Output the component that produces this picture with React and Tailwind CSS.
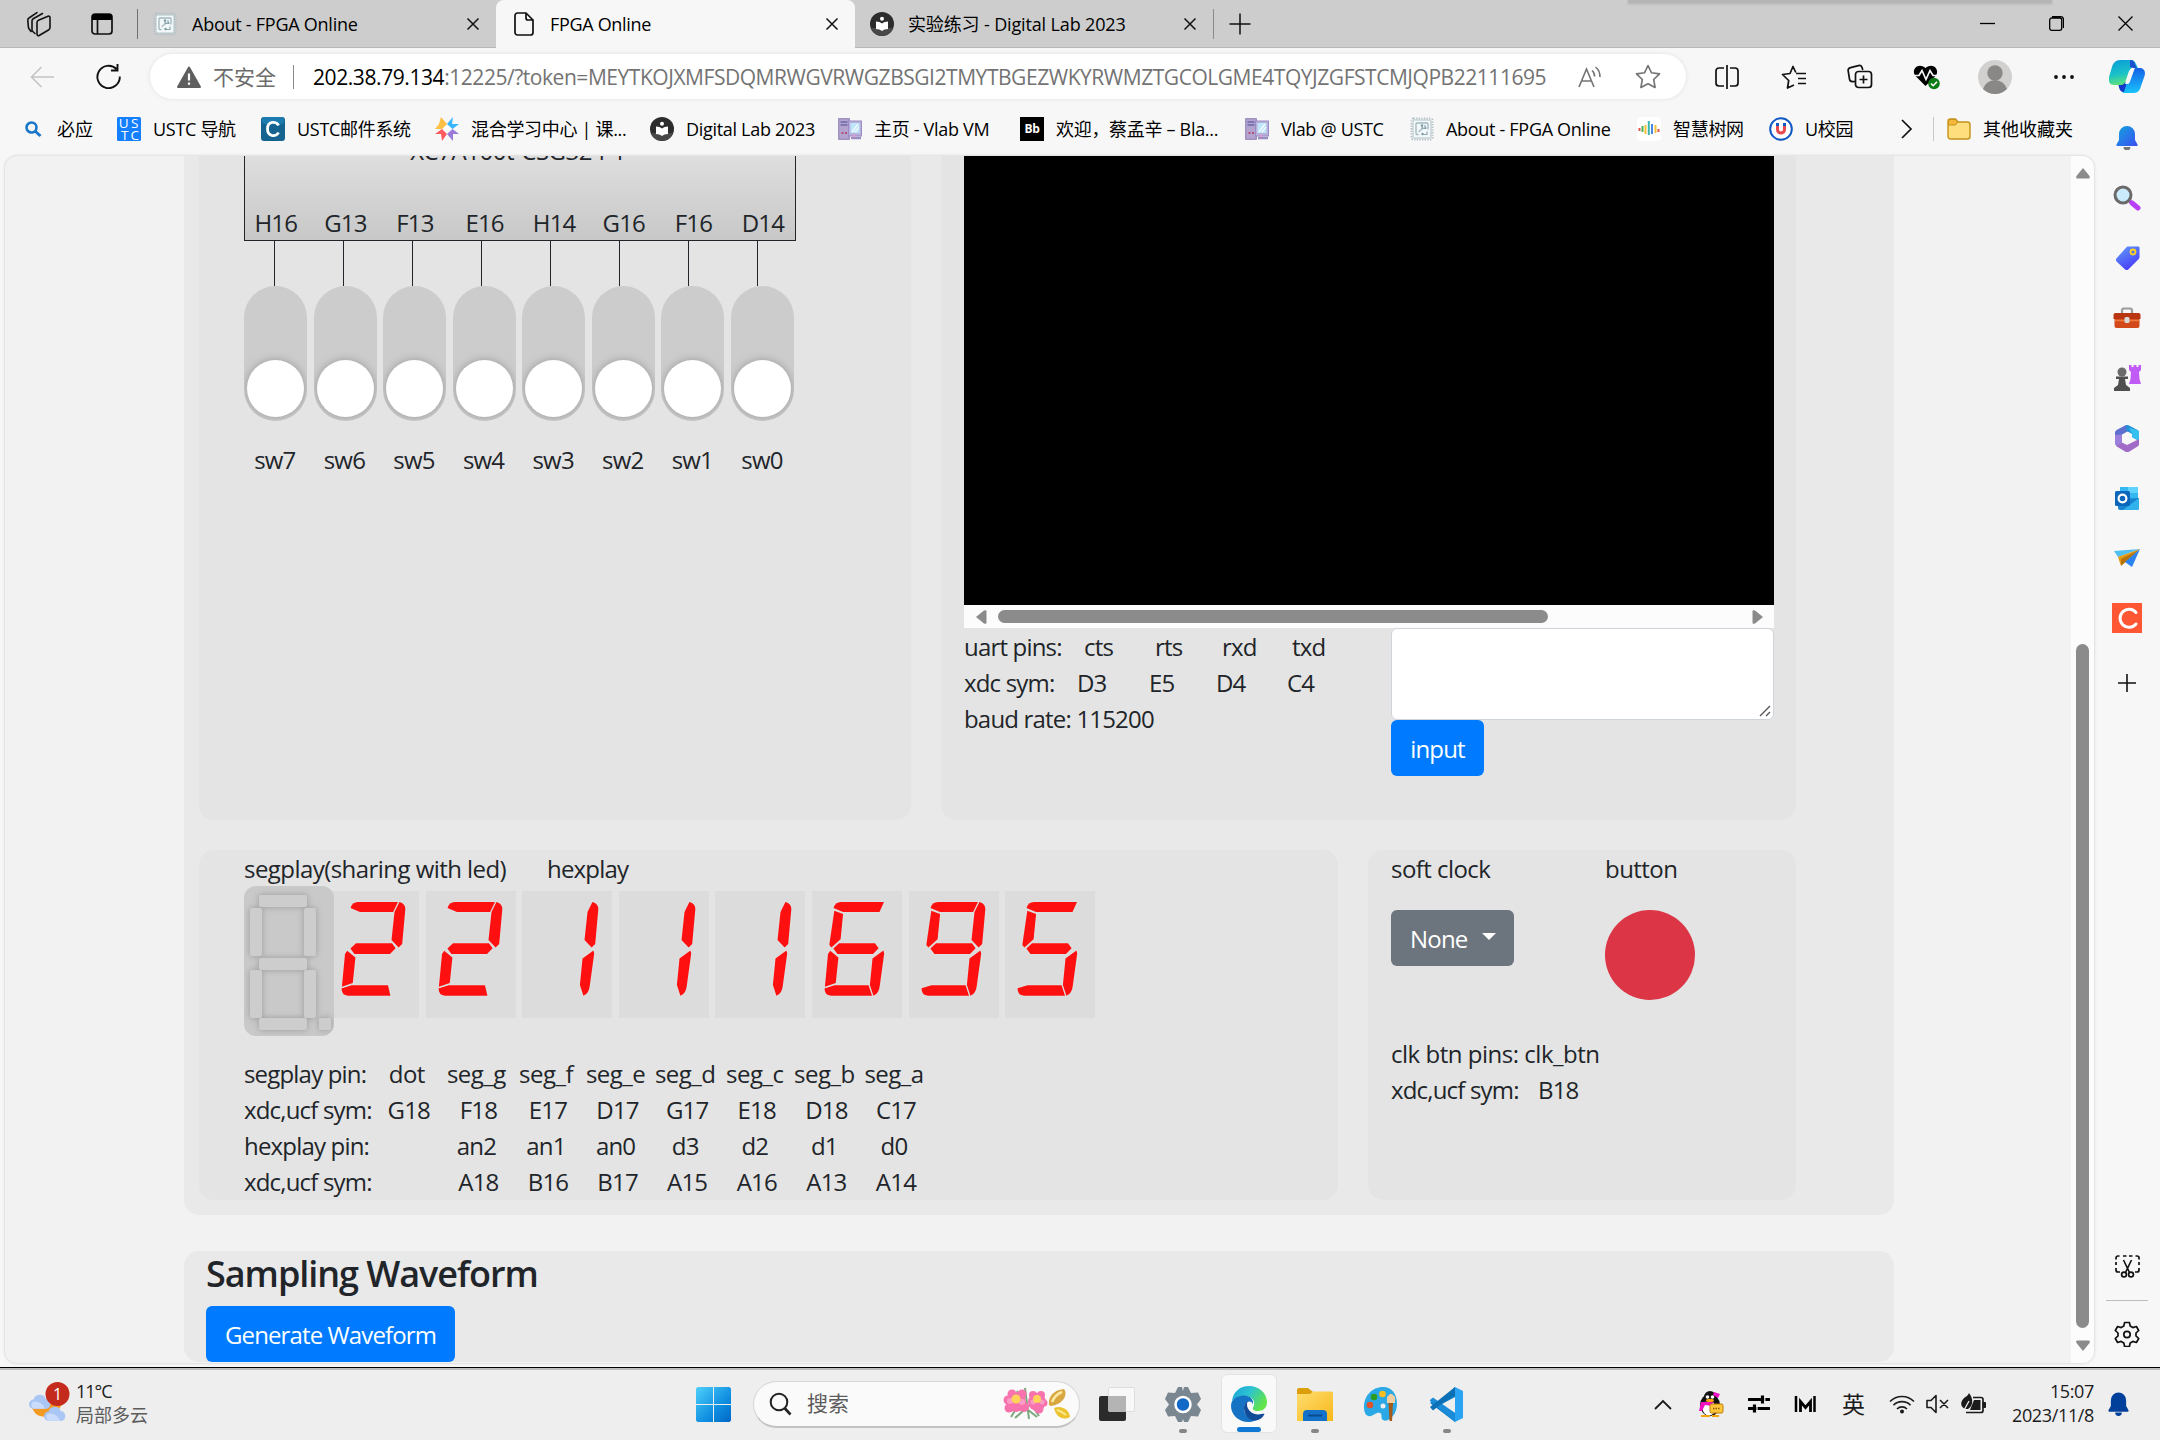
import React from "react";

const Svg = ({ w = 24, h = w, box, children, className = "" }) => (
  <svg width={w} height={h} viewBox={box || `0 0 ${w} ${h}`} fill="none" className={`shrink-0 ${className}`}>
    {children}
  </svg>
);

/* ---------- favicons ---------- */
const FpgaIcon = () => (
  <Svg>
    <rect x="1.500" y="1.500" width="21" height="21" rx="2" stroke="#b4c1c6" strokeWidth="2" strokeDasharray="1.300 1.300" />
    <rect x="3" y="3" width="18" height="18" rx="1.500" fill="#f2f8f9" stroke="#b4c4ca" />
    <path d="M8.500 17.500H7a1 1 0 0 1-1-1V7a1 1 0 0 1 1-1h10a1 1 0 0 1 1 1v5.500M9 15c.5-2.500 4-1.500 4-5" stroke="#a3b6bd" strokeWidth="1.300" />
    <path d="M12 8.500v3h3M15 8v2.500M13 17.500h4v-3" stroke="#8fa9b3" strokeWidth="1.200" />
    <circle cx="12" cy="8.500" r="1.200" fill="#7d9ba6" />
    <circle cx="15.500" cy="11" r="1.100" fill="#7d9ba6" />
    <circle cx="12.500" cy="17" r="1.200" fill="#7d9ba6" />
  </Svg>
);
const LabIcon = () => (
  <Svg>
    <circle cx="12" cy="12" r="12" fill="#2c2c2c" />
    <path d="M0.800 16a12 12 0 0 0 22.400 0z" fill="#484848" />
    <circle cx="12" cy="6.800" r="2" fill="#fff" />
    <path d="M6 9.500c2.500 0 4.600.7 6 2 1.400-1.300 3.500-2 6-2V17c-2.500 0-4.600.7-6 2-1.400-1.300-3.500-2-6-2z" fill="#fff" />
  </Svg>
);
const VlabIcon = () => (
  <Svg>
    <rect x="0.700" y="1.700" width="10.600" height="20.600" fill="#b3a3cf" stroke="#8f7fb5" />
    <path d="M2.500 5h7M2.500 8h7" stroke="#6d6aa8" strokeWidth="1.500" />
    <path d="M3.500 16h2M7 16h2" stroke="#b5507c" strokeWidth="2" />
    <rect x="10.500" y="4" width="13" height="15" fill="#b9b0dc" stroke="#9a8cc4" />
    <rect x="12.500" y="6" width="9" height="10" fill="#bfe6fa" />
    <path d="M14 15l6-8M17 15l4-5" stroke="#fff" strokeWidth="1.200" />
    <path d="M13 21h10" stroke="#9a8cc4" strokeWidth="2.500" />
    <path d="M16 18v2" stroke="#ff8cc6" strokeWidth="1.500" />
  </Svg>
);
const BingIcon = () => (
  <Svg w={18} h={18}>
    <circle cx="7.500" cy="7.500" r="5" stroke="#1a76c9" strokeWidth="2.600" />
    <path d="M11.500 11.500l5 4.500" stroke="#1a76c9" strokeWidth="3" />
  </Svg>
);
const UstcIcon = () => (
  <Svg>
    <rect width="24" height="24" rx="1.500" fill="#1480ff" />
    <g fill="#fff" fontSize="13.500" textAnchor="middle">
      <text x="6.500" y="11">U</text>
      <text x="17.500" y="11">S</text>
      <text x="7.500" y="22.500">T</text>
      <text x="17.500" y="22.500">C</text>
    </g>
  </Svg>
);
const MailIcon = () => (
  <Svg>
    <rect width="24" height="24" rx="3" fill="#15648f" />
    <rect x="1" y="0" width="22" height="7" rx="3" fill="#1d7caf" />
    <path d="M17.500 8.500C15.800 4.200 6.500 3.600 6.500 12s9.300 7.800 11 3.500" stroke="#fff" strokeWidth="2.800" />
  </Svg>
);
const MixIcon = () => (
  <Svg>
    <path d="M6 0l6 7-5 5H0l4-5z" fill="#ffc043" />
    <path d="M18 0l-1 7h7l-6.500 5-5.500-5z" fill="#38b6ff" />
    <path d="M0 17l7-5 5 5-5 7-1-7z" fill="#ff5a5f" />
    <path d="M24 17l-6.500-5-5.500 5 6 7v-7z" fill="#9b7bd8" />
    <path d="M12 8l4.500 4-4.500 4-4-4z" fill="#fff" />
  </Svg>
);
const BbIcon = () => (
  <div className="flex h-6 w-6 shrink-0 items-center justify-center bg-black text-[12px] font-bold leading-4 tracking-tight text-white">Bb</div>
);
const TreeIcon = () => (
  <Svg>
    <rect width="24" height="24" rx="4" fill="#fff" />
    <path d="M2.500 11v3M21.500 12v3" stroke="#e8504a" strokeWidth="2" />
    <path d="M5.500 9v6" stroke="#4fb35c" strokeWidth="2" />
    <path d="M8.500 8v9M18.500 8v8" stroke="#f4c136" strokeWidth="2" />
    <path d="M11.800 4v14" stroke="#3db6ac" strokeWidth="2" />
    <path d="M15 7v10" stroke="#4a86e8" strokeWidth="2" />
  </Svg>
);
const UIcon = () => (
  <Svg>
    <circle cx="12" cy="12" r="10.800" fill="#fff" stroke="#1259c3" strokeWidth="2" />
    <path d="M8.500 6v6.500c0 4.500 7 4.500 7 0V6" stroke="#e8474b" strokeWidth="3" />
    <path d="M8.500 6v3M15.500 6v3" stroke="#1259c3" strokeWidth="3" />
  </Svg>
);
const FolderIcon = () => (
  <Svg>
    <path d="M1 4.500A2.500 2.500 0 0 1 3.500 2h5l2.500 3h9.500A2.500 2.500 0 0 1 23 7.500v12a2.500 2.500 0 0 1-2.500 2.500h-17A2.500 2.500 0 0 1 1 19.500z" fill="#ffdf7d" stroke="#c4911a" strokeWidth="1.400" />
    <path d="M1.500 8V4.500a2 2 0 0 1 2-2h5L10.500 5 8.500 8z" fill="#f5b73c" stroke="#c4911a" />
  </Svg>
);

const TabClose = () => (
  <Svg w={14}>
    <path d="M1.500 1.500l11 11M12.500 1.500l-11 11" stroke="#111" strokeWidth="1.500" />
  </Svg>
);

const Divider = ({ className }) => <div className={`w-px shrink-0 ${className}`} />;

/* ---------- browser chrome ---------- */
const TabBar = () => (
  <div className="relative flex h-12 shrink-0 bg-[#cdcdcd] text-[18px] leading-6 tracking-[-0.018em] text-black">
    <div className="absolute left-[1628px] top-0 h-[3px] w-[424px] bg-[#b5b5b5] shadow-[0_1px_3px_#b0b0b0]" />
    <div className="flex w-[496px] items-center border-b border-[#b8b8b8] pl-[26px]">
      <Svg w={26}>
        <path d="M5 20.500L3.200 18c-.5-.6-.7-1-.8-1.800L1.800 9.500c-.1-1.100.3-2 1.200-2.500L11 1.700M9 22.500l-2.200-2c-.6-.5-.8-1-.8-1.800V10c0-1 .4-1.800 1.200-2.300L16.500 2.500" stroke="#111" strokeWidth="1.600" strokeLinecap="round" />
        <path d="M12.500 9.300l9.500-4c1.200-.5 2 .1 2 1.300v10c0 .9-.4 1.600-1.100 2.100l-9.300 5.600c-1.500.9-2.600.2-2.600-1.300V11.500c0-1.100.5-1.800 1.500-2.200z" stroke="#111" strokeWidth="1.600" strokeLinejoin="round" />
      </Svg>
      <Svg w={22} className="ml-[39px]">
        <rect x="1" y="1" width="20" height="20" rx="3" stroke="#111" strokeWidth="1.700" />
        <path d="M1 7V4a3 3 0 0 1 3-3h14a3 3 0 0 1 3 3v3z" fill="#000" />
        <path d="M6.500 7v14" stroke="#111" strokeWidth="1.700" />
      </Svg>
      <Divider className="ml-6 h-[30px] bg-[#6f6f6f]" />
      <div className="ml-[15px] flex"><FpgaIcon /></div>
      <span className="ml-[15px] w-[274px] whitespace-nowrap tracking-[-0.014em]">About - FPGA Online</span>
      <TabClose />
    </div>
    <div className="flex w-[359px] items-center rounded-t-lg bg-[#f7f7f7] pl-[18px]">
      <Svg w={20} h={24}>
        <path d="M3.500 1h8.500l7 7v12.500a2.500 2.500 0 0 1-2.500 2.500h-13A2.500 2.500 0 0 1 1 20.500v-17A2.500 2.500 0 0 1 3.500 1zM12 1v5a2 2 0 0 0 2 2h5" stroke="#111" strokeWidth="1.700" />
      </Svg>
      <span className="ml-4 w-[275px] whitespace-nowrap">FPGA Online</span>
      <TabClose />
    </div>
    <div className="flex flex-1 items-center border-b border-[#b8b8b8] pl-[15px]">
      <LabIcon />
      <span className="ml-[14px] w-[275px] whitespace-nowrap tracking-[-0.008em]">实验练习 - Digital Lab 2023</span>
      <TabClose />
      <Divider className="ml-4 h-[30px] bg-[#8a8a8a]" />
      <Svg w={22} className="ml-[15px]">
        <path d="M11 .5v21M.5 11h21" stroke="#111" strokeWidth="1.500" />
      </Svg>
      <div className="ml-auto flex items-center gap-[54px] pr-[27px]">
        <Svg w={15}><path d="M0 7.500h15" stroke="#000" strokeWidth="1.300" /></Svg>
        <Svg w={15}>
          <path d="M.7 4a2 2 0 0 1 2-2h8a2 2 0 0 1 2 2v8.300a2 2 0 0 1-2 2h-8a2 2 0 0 1-2-2zM3 .7h8.500a3 3 0 0 1 3 3V12" stroke="#000" strokeWidth="1.300" />
        </Svg>
        <Svg w={15}><path d="M.5.5l14 14M14.500.5l-14 14" stroke="#000" strokeWidth="1.300" /></Svg>
      </div>
    </div>
  </div>
);

const AddressBar = () => (
  <div className="flex h-[57px] shrink-0 items-center pl-[30px]">
    <Svg w={24} h={22}>
      <path d="M11.500 1L1.500 11l10 10M1.500 11H24" stroke="#c4c4c4" strokeWidth="1.600" />
    </Svg>
    <Svg w={25} h={25} className="ml-[42px]">
      <path d="M20.500 5A11.200 11.200 0 1 0 23.800 12.500M21.500 0v6.500H15" stroke="#111" strokeWidth="1.900" />
    </Svg>
    <div className="ml-[29px] flex h-[45px] w-[1536px] items-center rounded-full bg-white pl-[27px] text-[21px] leading-7 shadow-[0_0_4px_#e0e0e0]">
      <Svg w={24} h={22}>
        <path d="M12 1.500L23 21H1z" fill="#5f5f5f" stroke="#5f5f5f" strokeWidth="2" strokeLinejoin="round" />
        <path d="M12 7.500v7M12 16.500v2.200" stroke="#fff" strokeWidth="2.200" />
      </Svg>
      <span className="ml-3 w-20 whitespace-nowrap text-[#6b6b6b]">不安全</span>
      <Divider className="h-6 bg-[#8a8a8a]" />
      <span className="ml-[19px] w-[1265px] whitespace-nowrap tracking-[-0.0218em] text-[#737373]">
        <span className="tracking-[-0.02em] text-black">202.38.79.134</span>:12225/?token=MEYTKOJXMFSDQMRWGVRWGZBSGI2TMYTBGEZWKYRWMZTGCOLGME4TQYJZGFSTCMJQPB22111695
      </span>
      <Svg w={24} h={22}>
        <path d="M1 21L8.500 3 16 21M3.800 15h9.400M14 4.500c1.800 1.500 2.600 3.500 2.600 6M17.500 1c3 2.400 4.500 6 4.500 10" stroke="#737373" strokeWidth="1.600" />
      </Svg>
      <Svg w={26} h={25} className="ml-[33px]" box="0 0 26 25">
        <path d="M13 1.500l3.500 7.300 8 1.100-5.800 5.600 1.400 8-7.100-3.800-7.100 3.800 1.400-8L1.500 9.900l8-1.100z" stroke="#737373" strokeWidth="1.600" strokeLinejoin="round" />
      </Svg>
    </div>
    <Svg w={26} h={24} className="ml-[28px]">
      <path d="M10 3H5a3 3 0 0 0-3 3v12a3 3 0 0 0 3 3h5M16 3h5a3 3 0 0 1 3 3v12a3 3 0 0 1-3 3h-5M13 0v24" stroke="#111" strokeWidth="1.700" />
    </Svg>
    <Svg w={26} h={24} className="ml-[41px]">
      <path d="M15 8.500h10M17 13.500h8M17 18.500h8M13 20l-6.500 3 1.200-7.500L1.500 9.500l7.500-1L12 1.500l2.800 6" stroke="#111" strokeWidth="1.700" strokeLinejoin="round" />
    </Svg>
    <Svg w={26} h={25} className="ml-[40px]">
      <path d="M8 17.500l-2.500.2a3 3 0 0 1-3-2.500L1.200 7A3 3 0 0 1 3.500 3.600l8-2A3 3 0 0 1 15 3.300l.8 2.700" stroke="#111" strokeWidth="1.700" />
      <rect x="8.500" y="7.500" width="16" height="16" rx="3" stroke="#111" strokeWidth="1.700" />
      <path d="M16.500 11.500v8M12.500 15.500h8" stroke="#111" strokeWidth="1.700" />
    </Svg>
    <Svg w={27} h={26} className="ml-[40px]">
      <path d="M12.500 22L2.500 12C-2.500 6 5-2.500 12.500 4c7.500-6.500 15 2 10 8z" fill="#000" />
      <path d="M0 11.500h6l3-5 4 9 4-9 3 5h5" stroke="#f7f7f7" strokeWidth="1.700" />
      <circle cx="21" cy="19.500" r="5.800" fill="#0f7b14" />
      <path d="M18 19.500l2.200 2.200 3.800-4" stroke="#fff" strokeWidth="1.600" />
    </Svg>
    <Svg w={34} className="ml-[38px]">
      <circle cx="17" cy="17" r="17" fill="#d2d0ce" />
      <circle cx="17" cy="13" r="7.700" fill="#8a8886" />
      <path d="M5 29a12.500 12.500 0 0 1 24 0 17 17 0 0 1-24 0z" fill="#8a8886" />
    </Svg>
    <Svg w={22} h={6} className="ml-[41px]">
      <circle cx="3" cy="3" r="1.900" fill="#111" /><circle cx="11" cy="3" r="1.900" fill="#111" /><circle cx="19" cy="3" r="1.900" fill="#111" />
    </Svg>
    <Svg w={36} h={33} className="ml-[34px]">
      <path d="M10 24l4 9h11c4 0 6-3 7-7l3.500-10c1.500-5-1-8-5-8h-5l-6 16z" fill="url(#cp2)" />
      <path d="M9 22h9l-3 10c-4 0-5-3-6-10z" fill="#1239c9" />
      <path d="M11 0h11c3 0 4 2 5 4l2 4h-4c-4 0-5 3-6 6l-2 6c-1 3-2 5-6 5H5c-4 0-6-3-5-8L3 7c1-4 4-7 8-7z" fill="url(#cp1)" />
      <path d="M16 24l5-14c1-2 2-2.500 4-2.500h1l-5 14c-1 2-2 2.500-4 2.500z" fill="#f7f7f7" />
      <path d="M21 0c3 0 4 1.500 5 4l1.700 4H24l-3-1z" fill="#1a4fd0" />
    </Svg>
  </div>
);

const bookmarks = [
  [UstcIcon, "USTC 导航", "w-[108px]"],
  [MailIcon, "USTC邮件系统", "w-[138px]"],
  [MixIcon, "混合学习中心 | 课...", "w-[179px]"],
  [LabIcon, "Digital Lab 2023", "w-[152px]"],
  [VlabIcon, "主页 - Vlab VM", "w-[146px]"],
  [BbIcon, "欢迎，蔡孟辛 – Bla...", "w-[189px]"],
  [VlabIcon, "Vlab @ USTC", "w-[129px]"],
  [FpgaIcon, "About - FPGA Online", "w-[191px]"],
  [TreeIcon, "智慧树网", "w-[96px]"],
  [UIcon, "U校园", "w-[96px]"],
];

const BookmarkBar = () => (
  <div className="flex h-[50px] shrink-0 items-center whitespace-nowrap pb-[3px] pl-6 text-[18px] leading-6 tracking-[-0.017em] text-black">
    <BingIcon />
    <span className="ml-[15px] w-[60px] tracking-normal">必应</span>
    {bookmarks.map(([Icon, label, width]) => (
      <div key={label} className="flex items-center">
        <Icon />
        <span className={`ml-3 ${width}`}>{label}</span>
      </div>
    ))}
    <Svg w={12} h={20}><path d="M1 1l9 9-9 9" stroke="#111" strokeWidth="1.700" /></Svg>
    <Divider className="ml-5 mr-[13px] h-6 bg-[#c8c8c8]" />
    <FolderIcon />
    <span className="ml-3 tracking-normal">其他收藏夹</span>
  </div>
);

/* ---------- page content ---------- */
const pins = ["H16", "G13", "F13", "E16", "H14", "G16", "F16", "D14"];
const switches = [7, 6, 5, 4, 3, 2, 1, 0];

const SwitchPanel = () => (
  <div className="h-[664px] w-[712px] rounded-b-[15px] bg-[#e4e4e4] pl-[45px]">
    <div className="h-[85px] w-[552px] overflow-hidden border-x border-b border-[#212529] bg-linear-to-b from-[#dedede] to-[#c8c8c8]">
      <div className="-mt-[23px] pr-1 text-center leading-9 tracking-[-0.02em]">XC7A100t-CSG324-1</div>
      <div className="-ml-1 mt-9 flex leading-9">
        {pins.map((p) => <span key={p} className="w-[69.6px] shrink-0 text-center">{p}</span>)}
      </div>
    </div>
    <div className="flex pl-[30px]">
      {pins.map((p) => <div key={p} className="h-[45px] w-[69px]"><div className="h-full w-px bg-[#212529]" /></div>)}
    </div>
    <div className="flex gap-[6.5px]">
      {switches.map((n) => (
        <div key={n} className="flex h-[135px] w-[63px] shrink-0 items-end justify-center overflow-hidden rounded-full bg-[#ccc] pb-1">
          <div className="h-[57px] w-[57px] rounded-full bg-white shadow-[0_0_8px_#999]" />
        </div>
      ))}
    </div>
    <div className="-ml-[4px] mt-[21px] flex leading-9">
      {switches.map((n) => <span key={n} className="w-[69.6px] shrink-0 text-center">sw{n}</span>)}
    </div>
  </div>
);

const UartPanel = () => (
  <div className="h-[664px] w-[855px] rounded-b-[15px] bg-[#e4e4e4] pl-[23px]">
    <div className="h-[449px] w-[810px] bg-black" />
    <div className="flex h-[23px] w-[810px] items-center bg-[#fcfcfc] pl-3">
      <Svg w={11} h={14}><path d="M0 7l8-6.500q2.500-1 2.500 1v11q0 2-2.500 1z" fill="#8b8b8b" /></Svg>
      <div className="ml-[11px] h-[13px] w-[550px] rounded-full bg-[#8b8b8b]" />
      <Svg w={11} h={14} className="ml-[204px]"><path d="M11 7L3 .5Q.5-.5.500 1.500v11q0 2 2.500 1z" fill="#8b8b8b" /></Svg>
    </div>
    <div className="flex">
      <div className="w-[427px] whitespace-nowrap pt-px leading-9">
        <div className="flex"><span className="w-[120px]">uart pins:</span><span className="w-[71px]">cts</span><span className="w-[67px]">rts</span><span className="w-[70px]">rxd</span><span>txd</span></div>
        <div className="flex"><span className="w-[113px]">xdc sym:</span><span className="w-[72px]">D3</span><span className="w-[67px]">E5</span><span className="w-[71px]">D4</span><span>C4</span></div>
        <div>baud rate: 115200</div>
      </div>
      <div>
        <div className="flex h-[92px] w-[383px] items-end justify-end rounded-md border border-[#ced4da] bg-white p-[2px]">
          <Svg w={12}><path d="M1 11L11 1M7 11l4-4" stroke="#555" strokeWidth="1.400" /></Svg>
        </div>
        <div className="flex h-14 w-[93px] items-center justify-center rounded-md bg-[#007bff] pt-0.5 text-white">input</div>
      </div>
    </div>
  </div>
);

const SEG = {
  a: "M21.500 17Q23 11 29 11H72L67.500 21H31Z",
  d: "M12.500 97.300L22.500 94.300H59L61.400 104.700H19Q12.500 104.500 12.500 97.300Z",
  g: "M21.400 57.500L27 52.300H63L66.600 57.200L61 63H25.400Z",
  b: "M70.400 11Q76.600 12.500 76.300 18.500L73.200 53L69.600 56.500L62.500 49L65.500 21Z",
  c: "M71.400 59.500L72.200 62.500L67.900 94Q67 103 61.400 104.800L57.900 94L60.500 67.500Z",
  e: "M18.200 59.700L26.400 66.500L23.800 92L12.900 95.800L16 63Z",
  f: "M22.300 19.700L31.100 23L28.600 48.300L19.400 56.500L17.300 54Z",
};
const DIGITS = { 1: "bc", 2: "adgbe", 5: "adgcf", 6: "adgcef", 9: "adgbcf" };

const HexDigit = ({ value }) => (
  <Svg w={90} h={127} className="bg-[#dcdcdc]">
    {DIGITS[value].split("").map((s) => (
      <g key={s}>
        <path d={SEG[s]} stroke="#dedede" strokeWidth="2.600" />
        <path d={SEG[s]} fill="#ff1010" />
      </g>
    ))}
  </Svg>
);

const SegDisplay = () => (
  <Svg w={90} h={150} className="z-10 -mt-[5px] rounded-xl bg-[#c9c9c9]">
    <g fill="#cdcdcd" className="drop-shadow-[0_0_3px_#999]">
      <rect x="15" y="9" width="48" height="12" rx="2" />
      <rect x="6" y="22" width="12" height="48" rx="2" />
      <rect x="60" y="22" width="12" height="48" rx="2" />
      <rect x="15" y="72" width="48" height="12" rx="2" />
      <rect x="6" y="84" width="12" height="48" rx="2" />
      <rect x="60" y="84" width="12" height="48" rx="2" />
      <rect x="15" y="132" width="48" height="12" rx="2" />
      <rect x="75" y="132" width="12" height="12" rx="1" />
    </g>
  </Svg>
);

const pinRows = [
  ["segplay pin:", ["dot", "seg_g", "seg_f", "seg_e", "seg_d", "seg_c", "seg_b", "seg_a"], "pl-0"],
  ["xdc,ucf sym:", ["G18", "F18", "E17", "D17", "G17", "E18", "D18", "C17"], "pl-[4px]"],
  ["hexplay pin:", ["", "an2", "an1", "an0", "d3", "d2", "d1", "d0"], "pl-0"],
  ["xdc,ucf sym:", ["", "A18", "B16", "B17", "A15", "A16", "A13", "A14"], "pl-[4px]"],
];

const DisplayPanel = () => (
  <div className="h-[350px] w-[1139px] rounded-[15px] bg-[#e4e4e4] pl-[45px] pt-px">
    <div className="flex whitespace-nowrap leading-9"><span className="w-[303px] tracking-[-0.023em]">segplay(sharing with led)</span><span>hexplay</span></div>
    <div className="mt-1 flex h-[127px]">
      <SegDisplay />
      <div className="-ml-[5px] flex gap-[6.600px]">
        {"22111695".split("").map((d, i) => <HexDigit key={i} value={d} />)}
      </div>
    </div>
    <div className="mt-[38px] whitespace-nowrap leading-9">
      {pinRows.map(([label, cells, shift], i) => (
        <div key={i} className="flex">
          <span className="w-32 shrink-0">{label}</span>
          {cells.map((c, j) => <span key={j} className={`w-[69.6px] shrink-0 text-center ${shift} ${i === 0 ? "tracking-[-0.022em]" : ""}`}>{c}</span>)}
        </div>
      ))}
    </div>
  </div>
);

const ClockPanel = () => (
  <div className="h-[350px] w-[428px] whitespace-nowrap rounded-[15px] bg-[#e4e4e4] pl-[23px] pt-px leading-9">
    <div className="flex tracking-[-0.023em]"><span className="w-[214px]">soft clock</span><span>button</span></div>
    <div className="mt-[23px] flex">
      <div className="w-[214px]">
        <div className="flex h-14 w-[123px] items-center rounded-md bg-[#6c757d] pl-[19px] pt-0.5 text-white">
          <span className="w-[72px]">None</span>
          <Svg w={14} h={7} className="-mt-[5px]"><path d="M0 0h14L7 7z" fill="#fff" /></Svg>
        </div>
      </div>
      <div className="h-[90px] w-[90px] rounded-full bg-[#dc3545]" />
    </div>
    <div className="mt-9 tracking-[-0.02em]">clk btn pins: clk_btn</div>
    <div className="flex"><span className="w-[147px]">xdc,ucf sym:</span><span>B18</span></div>
  </div>
);

const Page = () => (
  <div className="ml-[5px] flex h-[1207px] w-[2089px] shrink-0 overflow-hidden rounded-xl bg-[#f2f2f2] shadow-[0_0_3px_#c4c4c4]">
    <div className="w-[2066px] pl-[179px] text-[24px] tracking-[-0.034em] text-[#212529]">
      <div className="h-[1059px] w-[1710px] rounded-b-[15px] bg-[#e9e9e9] pl-[15px]">
        <div className="flex gap-[30px]"><SwitchPanel /><UartPanel /></div>
        <div className="mt-[30px] flex gap-[30px]"><DisplayPanel /><ClockPanel /></div>
      </div>
      <div className="mt-9 h-[111px] w-[1710px] rounded-[15px] bg-[#e9e9e9] pl-[22px]">
        <div className="h-[55px] text-[36px] font-semibold leading-[46px] tracking-[-0.029em]">Sampling Waveform</div>
        <div className="flex h-14 w-[249px] items-center justify-center rounded-md bg-[#007bff] pt-0.5 tracking-[-0.037em] text-white">Generate Waveform</div>
      </div>
    </div>
    <div className="flex w-[23px] flex-col items-center bg-[#fcfcfc] pt-3">
      <Svg w={14} h={11}><path d="M7 0l6.500 8q1 2.500-1 2.500h-11q-2 0-1-2.500z" fill="#8b8b8b" /></Svg>
      <div className="mt-[465px] h-[684px] w-[13px] rounded-full bg-[#8b8b8b]" />
      <Svg w={14} h={11} className="mt-3"><path d="M7 11l6.500-8q1-2.500-1-2.500h-11q-2 0-1 2.500z" fill="#8b8b8b" /></Svg>
    </div>
  </div>
);

/* ---------- edge sidebar ---------- */
const Bell = ({ color, w = 22, h = 24 }) => (
  <Svg w={w} h={h} box="0 0 22 24">
    <path d="M11 0a8 8 0 0 1 8 8v6l2.500 4.500c.5 1-.2 1.500-1 1.500h-19c-.8 0-1.500-.5-1-1.500L3 14V8a8 8 0 0 1 8-8z" fill={color} />
    <path d="M7.500 21h7a3.500 3.500 0 0 1-7 0z" fill={color === "url(#bell)" ? "#777" : color} />
  </Svg>
);
const sideIcons = [
  <Svg w={28} h={26}>
    <ellipse cx="10" cy="10" rx="8" ry="8" fill="#c9ebfb" stroke="#6a6a6a" strokeWidth="3" />
    <path d="M16.500 16l4 3.500" stroke="#8a5aa0" strokeWidth="3" /><path d="M19 18l6 5" stroke="#b83ff5" strokeWidth="5" strokeLinecap="round" />
  </Svg>,
  <Svg w={26} h={26}>
    <path d="M14 1.500h10c1 0 1.500.5 1.500 1.500v9c0 1-.5 1.700-1 2.200l-10 10c-1.200 1.200-2.500 1.200-3.700 0l-8-7.500c-1.200-1-1.200-2.700 0-3.700l9-10c.7-.8 1.300-1.500 2.200-1.500z" fill="url(#tag)" />
    <circle cx="19" cy="7" r="2.500" stroke="#ffd21f" strokeWidth="1.800" fill="#5876e8" />
  </Svg>,
  <Svg w={28} h={24}>
    <path d="M9 7V4.500A2 2 0 0 1 11 2.500h6a2 2 0 0 1 2 2V7" stroke="#9b9b9b" strokeWidth="2.200" />
    <rect x="1.500" y="7" width="25" height="15" rx="2" fill="#d2491a" /><path d="M.5 9a2 2 0 0 1 2-2h23a2 2 0 0 1 2 2v4H.5z" fill="#b93710" />
    <path d="M2 14.500h24" stroke="#ee7a3d" strokeWidth="1.500" /><rect x="11.500" y="11" width="5" height="6" rx="1.500" fill="#d8d8d8" />
  </Svg>,
  <Svg w={28} h={28}>
    <path d="M16 1h2.500v2h2V1h3v2h2V1H28v5l-2 2 .5 7 1.500 5H16l1.500-5 .5-7-2-2z" fill="#c05bf5" />
    <circle cx="9" cy="8" r="4.500" fill="#6a6a6a" /><path d="M3 12.500h12v2.500h-3l1 6 4 3v3H1v-3l4-3 1-6H3z" fill="#4f4f4f" />
  </Svg>,
  <Svg w={26} h={27}>
    <path d="M12 0l7 3.500-11 6v8l-5 3.500L1 19V8c0-1.500.5-2.500 2-3.300z" fill="#5e70cf" />
    <path d="M12 0c1-.4 2-.2 3 .4L23.500 5C24.500 5.500 25 6.500 25 8v8l-7-4V9l-6-3.500z" fill="#2490d8" />
    <path d="M15 3l8.500 2C24.500 5.500 25 6.500 25 8v8l-7-4V9z" fill="#35c0f0" />
    <path d="M25 12v7c0 1.200-.5 2-1.500 2.600l-8 4.800c-1.500.8-3 .8-4.500 0L2 21l6-3.500 5 2.500 12-6z" fill="#a06cc8" />
    <path d="M1 10v9l2 2 5-3.500v-8z" fill="#9a7fdc" />
    <path d="M8.500 10.500l4.500-2.500 4.500 2.500v5L13 18.500l-4.500-3z" fill="#f7f7f7" />
  </Svg>,
  <Svg w={26} h={25}>
    <path d="M6 1h18v12H6z" fill="#35b8f1" /><path d="M14 1h10v6H14z" fill="#5fd3fb" /><path d="M4 13l21-1v10a2 2 0 0 1-2 2H6a2 2 0 0 1-2-2z" fill="#1683d0" />
    <path d="M25 12L9 24h14a2 2 0 0 0 2-2z" fill="#32b2ec" />
    <rect x="1" y="5" width="15" height="15" rx="1.500" fill="#0a65bd" /><circle cx="8.500" cy="12.500" r="3.900" stroke="#fff" strokeWidth="2.200" />
  </Svg>,
  <Svg w={28} h={20}>
    <path d="M1 3L27 1 5 9z" fill="#4fc0f0" /><path d="M5 9L27 1 8 11.500v6.500z" fill="#e59a12" /><path d="M8 18l4-3.500L27 1 8 11z" fill="#b87408" />
    <path d="M12 14L27 1l-8 18z" fill="#2a83ee" />
  </Svg>,
  <Svg w={30} h={30}>
    <rect width="30" height="30" fill="#ff5733" /><path d="M24 9.500A9 9 0 1 0 24 21" stroke="#fff" strokeWidth="3" strokeLinecap="round" />
  </Svg>,
  <Svg w={18} h={18}><path d="M9 0v18M0 9h18" stroke="#111" strokeWidth="1.600" /></Svg>,
];

const Sidebar = () => (
  <div className="flex flex-1 flex-col items-center">
    <div className="-mt-12 flex h-[60px] items-center"><Bell color="url(#bell)" /></div>
    {sideIcons.map((icon, i) => <div key={i} className={i === 8 ? "mt-[5px] flex h-[60px] items-center" : "flex h-[60px] items-center"}>{icon}</div>)}
    <div className="mt-auto flex flex-col items-center pb-[20px]">
      <Svg w={25} h={23}>
        <path d="M5 17H3a2 2 0 0 1-2-2V13M1 10V7M1 4.500V3a2 2 0 0 1 2-2h1.500M8 1h3.500M14 1h3.500M20.500 1H22a2 2 0 0 1 2 2v1.500M24 7v3M24 13v2a2 2 0 0 1-2 2h-2" stroke="#111" strokeWidth="1.700" />
        <path d="M8.500 5l6 12.500M16.500 5l-6 12.500" stroke="#111" strokeWidth="1.600" />
        <circle cx="9" cy="19.500" r="2.400" stroke="#111" strokeWidth="1.700" /><circle cx="16" cy="19.500" r="2.400" stroke="#111" strokeWidth="1.700" />
      </Svg>
      <div className="mb-5 mt-[22px] h-px w-[42px] bg-[#bdbdbd]" />
      <Svg w={26} h={26} box="0 0 26 26">
        <path d="M10.600 1.500h4.800l.8 3.600 2.600 1.500 3.600-1.100 2.300 4-2.700 2.500v2.900l2.700 2.600-2.300 4-3.600-1.100-2.600 1.500-.8 3.600h-4.800l-.8-3.600-2.600-1.500-3.600 1.100-2.300-4L4 14.900V12L1.300 9.500l2.300-4 3.600 1.100 2.600-1.500z" stroke="#111" strokeWidth="1.700" strokeLinejoin="round" />
        <circle cx="13" cy="13.500" r="3.200" stroke="#111" strokeWidth="1.700" />
      </Svg>
    </div>
  </div>
);

/* ---------- taskbar ---------- */
const Cloud = ({ t }) => (
  <g transform={t}>
    <path d="M4 12a4 4 0 0 1 0-8 5.500 5.500 0 0 1 10.500-.5A4.500 4.500 0 0 1 16 12z" fill="#a9c6f5" /><path d="M4 12a4 4 0 0 1-1-6c4-1 9 1 11 6z" fill="#c9dcfb" />
  </g>
);
const Running = () => <div className="mt-[7px] h-[5px] w-2 rounded-full bg-[#868686]" />;
const TaskIcon = ({ children, dot }) => (
  <div className="flex h-[57px] w-14 flex-col items-center pt-[11px]">{children}{dot && <Running />}</div>
);

const Taskbar = () => (
  <div className="flex h-[73px] shrink-0 flex-col bg-[#eee]">
    <div className="h-px bg-black" />
    <div className="h-[2px] bg-[#bdbdbd]" />
    <div className="flex h-[70px] items-center pb-px text-[18px] text-[#1b1b1b]">
      <div className="flex w-[696px] items-center pb-[3px] pl-7">
        <Svg w={42} h={42}>
          <path d="M34 10c4 14-8 28-22 24-4-1-6-4-8-8 14 2 18-8 17-14z" fill="#f39a23" />
          <Cloud t="translate(1 13) scale(1.150)" />
          <Cloud t="translate(16 25) scale(1.150)" />
          <circle cx="29.500" cy="12" r="12" fill="#c42b1c" />
          <text x="29.500" y="17.500" textAnchor="middle" fontSize="16" fill="#fff">1</text>
        </Svg>
        <div className="ml-[6px] leading-6">
          <div className="tracking-[-0.055em]"><span>11</span><span>°</span><span>C</span></div>
          <div className="text-[#5c5c5c]">局部多云</div>
        </div>
      </div>
      <Svg w={35}>
        <path d="M1.500 0H17v17H0V1.500zM18 0h15.500L35 1.500V17H18zM0 18h17v17H1.500L0 33.500zM18 18h17v15.500L33.500 35H18z" fill="url(#win)" />
      </Svg>
      <div className="ml-[22px] flex h-[47px] w-[327px] items-center rounded-full border border-b-2 border-[#d6d6d6] border-b-[#c2c2c2] bg-[#fafafa] pl-[15px]">
        <Svg w={24} h={24}>
          <circle cx="10" cy="10" r="8.300" stroke="#222" strokeWidth="2" /><path d="M15.500 16l6 6.500" stroke="#222" strokeWidth="2.600" />
        </Svg>
        <span className="ml-[14px] w-[196px] text-[21px] text-[#5c5c5c]">搜索</span>
        <Svg w={70} h={34}>
          <path d="M8 30l10-16M22 1l4 31M12 31l16-14 8 12M14 4l10 20M24 22l10 8" stroke="#7da77d" strokeWidth="2" />
          <g fill="#f773ae">
            <circle cx="13" cy="15" r="10" /><circle cx="5" cy="13" r="4.500" /><circle cx="9" cy="7" r="4.500" /><circle cx="19" cy="7" r="4.500" /><circle cx="21" cy="20" r="5" /><circle cx="6" cy="21" r="4.500" />
            <circle cx="34" cy="15" r="9" /><circle cx="30" cy="8" r="4" /><circle cx="38" cy="8" r="4" /><circle cx="41" cy="16" r="3.500" /><circle cx="36" cy="22" r="4.500" />
          </g>
          <g fill="#fb9cc5"><circle cx="7" cy="14" r="3" /><circle cx="19" cy="15" r="3" /><circle cx="30" cy="15" r="2.500" /><circle cx="39" cy="15" r="2.500" /></g>
          <circle cx="13" cy="12" r="4.500" fill="#ffd358" /><circle cx="34" cy="12" r="4" fill="#ffd358" />
          <path d="M46 18c-1-8 4-15 15-16 4 5 0 15-13 17z" fill="#d9a740" /><path d="M49 15c2-5 5-8 10-10" stroke="#fae9a5" strokeWidth="2.500" />
          <path d="M51 21c6-3 15 0 16 9-7 4-14 0-16-9z" fill="#ecc32f" /><path d="M54 23c3 1 7 3 9 5" stroke="#fbe88a" strokeWidth="2" />
        </Svg>
      </div>
      <div className="ml-[9px] flex h-[57px] items-start gap-[10px]">
        <TaskIcon>
          <Svg w={36} h={35}>
            <rect x="0" y="9" width="27" height="25" rx="2" fill="#2b2b2b" /><rect x="9.500" y=".5" width="26" height="24" rx="2" fill="#f8f8f8" stroke="#ddd" /><path d="M9 9h18v16H11a2 2 0 0 1-2-2z" fill="#b4b4b4" />
          </Svg>
        </TaskIcon>
        <TaskIcon dot>
          <Svg w={36} h={35} box="0 0 36 35">
            <path d="M13 0h4l1 4 1-4h4l3 6 7-.5L36 12l-4 5.500 4 5.500-3 6.500-7-.5-3 6h-4l-1-3-1 3h-4l-3-6-7 .5L0 23l4-5.500L0 12l3-6.500 7 .5z" fill="#7a8791" />
            <circle cx="18" cy="17.500" r="7.500" fill="#1268c6" stroke="#fff" strokeWidth="2.500" />
          </Svg>
        </TaskIcon>
        <div className="-mt-[2px] flex h-[59px] w-14 flex-col items-center rounded-md border border-[#e3e3e3] bg-[#f9f9f9] pt-[11px]">
          <Svg w={36} h={36}>
            <path d="M1 15C2 6 9 0 18 0c10 0 18 7 18 16 0 6-4 9-9 9-4 0-6-1.500-5-3.500C26 15 20 10 14 10 8 10 3 12 1 15z" fill="url(#edge1)" />
            <path d="M0 20C0 13 6 9.500 13 9.500c6 0 10 4 9 9-.4-2-2-3-3.500-3-3 0-5.500 3-5.500 7 0 7 6 12 13 11-3 2-6 2.500-9 2.500C8 36 0 29 0 20z" fill="#1673c4" />
            <path d="M13 22c0-3 1.500-6 4-6.500-1 1-1 2-1 3 0 6 6 10 11 10 3 0 5.500-1 6.500-.5-1.500 3.500-5 6-8.500 6.500-6 1-12-5-12-12.500z" fill="#124c99" />
          </Svg>
          <div className="mt-[5px] h-[5px] w-6 rounded-full bg-[#0f78d4]" />
        </div>
        <TaskIcon dot>
          <Svg w={36} h={35}>
            <path d="M0 3a2 2 0 0 1 2-2h9l5 4h18a2 2 0 0 1 2 2v6H0z" fill="#dd9e0b" /><path d="M0 7h13l3-2.500h18a2 2 0 0 1 2 2V34H0z" fill="url(#fold)" />
            <path d="M6 34v-7a4 4 0 0 1 4-4h16a4 4 0 0 1 4 4v7z" fill="#1473c9" /><path d="M11 28.500h14" stroke="#0a4a91" strokeWidth="2" />
          </Svg>
        </TaskIcon>
        <TaskIcon>
          <Svg w={36} h={35}>
            <path d="M20 0C9 0 1 9 1 20c0 7 3 10 7 9 4-1 5-4 9-3 3 1 0 5 3 7 5 3 14-5 14-16C34 7 29 0 20 0z" fill="#2aa9e6" />
            <circle cx="11" cy="10" r="3.300" fill="#2d9b1e" /><circle cx="19.500" cy="7" r="3.300" fill="#f6bf1d" /><circle cx="7" cy="18" r="3.300" fill="#e2512a" /><circle cx="20" cy="19" r="2.500" fill="#eee" />
            <path d="M24 10l3-3h2l3 3v6h-8z" fill="#f2cfa0" /><path d="M25.500 16h4.500l-1 18h-2.500z" fill="#a45a19" />
          </Svg>
        </TaskIcon>
        <TaskIcon dot>
          <Svg w={36} h={35}>
            <path d="M26 0L9 17 4.500 13.500 1 16l25 19v-9L12 17.500 26 10z" fill="#0f7cc4" /><path d="M26 26L4 10.500 1 13v1l25 21z" fill="#1a8bd8" /><path d="M1 20l3 3.500L9.500 19 26 8V0z" fill="#0b70b5" /><path d="M26 0l8 4v27l-8 4z" fill="#29a3f2" />
          </Svg>
        </TaskIcon>
      </div>
      <div className="ml-auto flex items-center pb-px">
        <Svg w={18} h={11}><path d="M1 10l8-8 8 8" stroke="#1b1b1b" strokeWidth="1.800" /></Svg>
        <Svg w={26} h={26} className="ml-[26px]">
          <ellipse cx="12" cy="14" rx="10" ry="11" fill="#111" /><ellipse cx="11" cy="17" rx="6.500" ry="7.500" fill="#fff" /><circle cx="12" cy="6" r="6" fill="#111" />
          <circle cx="9.500" cy="6" r="1.800" fill="#fff" /><circle cx="14.500" cy="6" r="1.800" fill="#fff" /><ellipse cx="12" cy="9.500" rx="4" ry="1.700" fill="#f5a40c" />
          <path d="M16 1l6 2-2 4-5-3zM3 11h12l-1 4-7-1-3 6H1z" fill="#f011c0" /><path d="M3 24h9v2H3zM14 24h7v2h-7z" fill="#f5a40c" />
          <rect x="12" y="13" width="13" height="9" rx="1.500" fill="#ffc53a" stroke="#b97c07" /><path d="M15 17.500h7" stroke="#8a5a00" strokeWidth="1.500" strokeDasharray="1.500 1" />
        </Svg>
        <Svg w={22} h={20} className="ml-[24px]">
          <path d="M1 5.500h20M1 14.500h20" stroke="#000" strokeWidth="3.200" strokeLinecap="round" /><path d="M14.500 1.500v8M6.500 10.500v8" stroke="#000" strokeWidth="3.200" /><path d="M16.800 2v7M9 11v7" stroke="#eee" strokeWidth="1.200" />
        </Svg>
        <Svg w={22} h={18} className="ml-[24px]">
          <path d="M2 1v16M20.500 1v16" stroke="#000" strokeWidth="2.500" /><path d="M6.500 17V6.500l5 6 5-6V17" stroke="#000" strokeWidth="2.800" />
        </Svg>
        <span className="ml-[26px] text-[23px] leading-7">英</span>
        <Svg w={26} h={20} className="ml-[24px]">
          <path d="M1 7.500a17 17 0 0 1 24 0M4.500 11.200a12 12 0 0 1 17 0M8 15a7 7 0 0 1 10 0" stroke="#1b1b1b" strokeWidth="1.600" /><circle cx="13" cy="17.500" r="2" fill="#1b1b1b" />
        </Svg>
        <Svg w={24} h={20} className="ml-[11px]">
          <path d="M1 6.500h4l5-5v17l-5-5H1zM14 6l8 8M22 6l-8 8" stroke="#1b1b1b" strokeWidth="1.600" strokeLinejoin="round" />
        </Svg>
        <Svg w={26} h={22} className="ml-[11px]">
          <path d="M12 4.500h8a2 2 0 0 1 2 2v11a2 2 0 0 1-2 2H5" stroke="#1b1b1b" strokeWidth="1.700" /><path d="M13 7h6.500v10H9z" fill="#1b1b1b" /><path d="M22 9.500h2.500v5H22z" fill="#1b1b1b" stroke="#1b1b1b" />
          <path d="M8 0c4 5 5 12-1 16-7 0-9-6-4-11 2-1.500 4-2.500 5-5z" fill="#1b1b1b" /><path d="M2 19L8 8" stroke="#eee" strokeWidth="1.300" />
        </Svg>
        <div className="ml-[10px] w-[97px] pb-[3px] text-right leading-6 tracking-[-0.02em]"><div>15:07</div><div>2023/11/8</div></div>
        <div className="ml-[14px] mr-[31px] flex"><Bell color="#003f9a" w={21} h={24} /></div>
      </div>
    </div>
  </div>
);

const Gradients = () => (
  <svg width="0" height="0" className="absolute">
    <defs>
      <linearGradient id="cp1" x1="0" y1="0" x2="0.2" y2="1"><stop stopColor="#0a9bd8" /><stop offset=".6" stopColor="#1ac2c9" /><stop offset="1" stopColor="#5be07f" /></linearGradient>
      <linearGradient id="cp2" x1="0" y1="0" x2="0" y2="1"><stop stopColor="#1560e8" /><stop offset="1" stopColor="#18c4fa" /></linearGradient>
      <linearGradient id="bell" x1="0" y1="0" x2="1" y2="1"><stop stopColor="#12a4dd" /><stop offset="1" stopColor="#3b50f2" /></linearGradient>
      <linearGradient id="tag" x1="0" y1="0" x2=".6" y2="1"><stop stopColor="#5fa0fa" /><stop offset="1" stopColor="#4a3cf7" /></linearGradient>
      <linearGradient id="win" x1="0" y1="0" x2="1" y2="1"><stop stopColor="#4fd0fb" /><stop offset=".6" stopColor="#0f8fe0" /><stop offset="1" stopColor="#0067c6" /></linearGradient>
      <linearGradient id="edge1" x1="0" y1="0" x2="1" y2=".5"><stop stopColor="#1a9fdc" /><stop offset=".5" stopColor="#2cc3d0" /><stop offset="1" stopColor="#62e44b" /></linearGradient>
      <linearGradient id="fold" x1="0" y1="0" x2="1" y2="1"><stop stopColor="#ffdd70" /><stop offset="1" stopColor="#f8b81a" /></linearGradient>
    </defs>
  </svg>
);

export default function App() {
  return (
    <div className="flex h-[1440px] w-[2160px] flex-col overflow-hidden bg-[#f7f7f7] font-['Open_Sans','Noto_Sans_CJK_SC',sans-serif]">
      <Gradients />
      <TabBar />
      <AddressBar />
      <BookmarkBar />
      <div className="flex h-[1212px] shrink-0 pt-px">
        <Page />
        <Sidebar />
      </div>
      <Taskbar />
    </div>
  );
}
